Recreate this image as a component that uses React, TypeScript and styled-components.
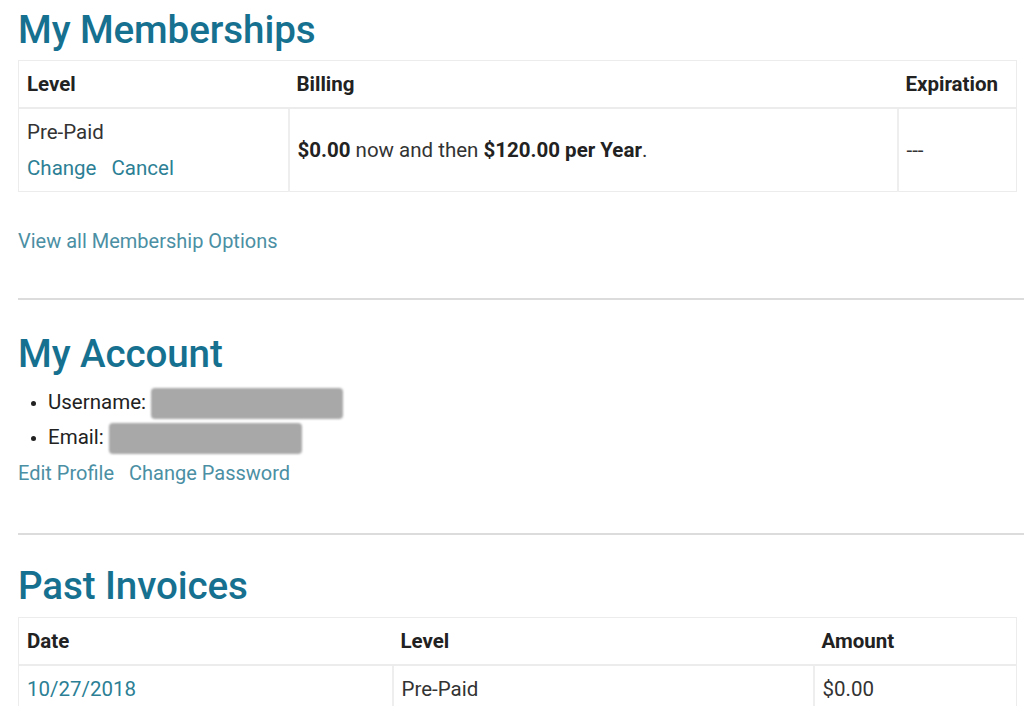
import React from "react";
import styled, { createGlobalStyle } from "styled-components";

const Global = createGlobalStyle`
  html, body { margin: 0; padding: 0; background: #fff; overflow: hidden; }
  body { font-family: Roboto, "Liberation Sans", Arial, sans-serif; color: #333; font-size: 20.5px; }
`;

const Page = styled.div`
  width: 1040px;
  padding: 0 0 0 18px;
  box-sizing: border-box;
`;

const Heading = styled.h2<{ $pt?: number }>`
  margin: 0;
  padding-top: ${(p) => p.$pt ?? 0}px;
  font-size: 38.6px;
  font-weight: 500;
  line-height: 46px;
  color: #16708f;
  letter-spacing: -0.1px;
`;

const Table = styled.table<{ $mt: number }>`
  margin-top: ${(p) => p.$mt}px;
  width: 998px;
  border-collapse: collapse;
  table-layout: fixed;
  border: 1px solid #ececec;
`;

const Th = styled.th<{ $w: number }>`
  box-sizing: border-box;
  width: ${(p) => p.$w}px;
  text-align: left;
  font-weight: 700;
  color: #222;
  padding: 8px 8px;
  line-height: 30px;
  border-bottom: 2px solid #ececec;
  white-space: nowrap;
`;

const Td = styled.td`
  padding: 8px 8px;
  line-height: 30px;
  border-left: 2px solid #eeeeee;
  vertical-align: middle;
  color: #333;
  &:first-child { border-left: none; }
`;

const LinkRow = styled.div<{ $gap: number }>`
  display: flex;
  gap: ${(p) => p.$gap}px;
  margin-top: 6px;
`;

const A = styled.a<{ $light?: boolean }>`
  color: ${(p) => (p.$light ? "#4b8fa4" : "#2c7f95")};
  font-size: ${(p) => (p.$light ? "20px" : "inherit")};
  text-decoration: none;
  cursor: pointer;
`;

const ViewAll = styled.div`
  margin-top: 34px;
  line-height: 30px;
`;

const Rule = styled.hr<{ $mt: number; $mb: number }>`
  margin: ${(p) => p.$mt}px 0 ${(p) => p.$mb}px 0;
  border: none;
  border-top: 2px solid #dcdcdc;
`;

const List = styled.ul`
  margin: 8px 0 0 0;
  padding-left: 30px;
  list-style: disc;
`;

const Item = styled.li`
  line-height: 35px;
  color: #222;
  &::marker { font-size: 16px; }
`;

const Redact = styled.span<{ $w: number }>`
  display: inline-block;
  width: ${(p) => p.$w}px;
  height: 31px;
  margin-left: 0px;
  vertical-align: middle;
  background: #a8a8a8;
  border-radius: 4px;
  filter: blur(0.8px);
`;

const AccountLinks = styled.div`
  display: flex;
  gap: 15px;
  line-height: 32px;
  margin-top: 2px;
`;

const Strong = styled.strong`
  font-weight: 700;
  color: #222;
`;

export default function App() {
  return (
    <>
      <Global />
      <Page>
        <Heading $pt={7}>My Memberships</Heading>
        <Table $mt={7}>
          <thead>
            <tr>
              <Th $w={270}>Level</Th>
              <Th $w={609}>Billing</Th>
              <Th $w={119}>Expiration</Th>
            </tr>
          </thead>
          <tbody>
            <tr>
              <Td>
                <div>Pre-Paid</div>
                <LinkRow $gap={15}>
                  <A>Change</A>
                  <A>Cancel</A>
                </LinkRow>
              </Td>
              <Td>
                <Strong>$0.00</Strong> now and then <Strong>$120.00 per Year</Strong>.
              </Td>
              <Td>---</Td>
            </tr>
          </tbody>
        </Table>
        <ViewAll>
          <A $light>View all Membership Options</A>
        </ViewAll>
        <Rule $mt={42} $mb={31} />
        <Heading>My Account</Heading>
        <List>
          <Item>
            Username: <Redact $w={192} />
          </Item>
          <Item>
            Email: <Redact $w={193} />
          </Item>
        </List>
        <AccountLinks>
          <A $light>Edit Profile</A>
          <A $light>Change Password</A>
        </AccountLinks>
        <Rule $mt={44} $mb={28} />
        <Heading>Past Invoices</Heading>
        <Table $mt={8}>
          <thead>
            <tr>
              <Th $w={374}>Date</Th>
              <Th $w={421}>Level</Th>
              <Th $w={203}>Amount</Th>
            </tr>
          </thead>
          <tbody>
            <tr>
              <Td>
                <A>10/27/2018</A>
              </Td>
              <Td>Pre-Paid</Td>
              <Td>$0.00</Td>
            </tr>
          </tbody>
        </Table>
      </Page>
    </>
  );
}
